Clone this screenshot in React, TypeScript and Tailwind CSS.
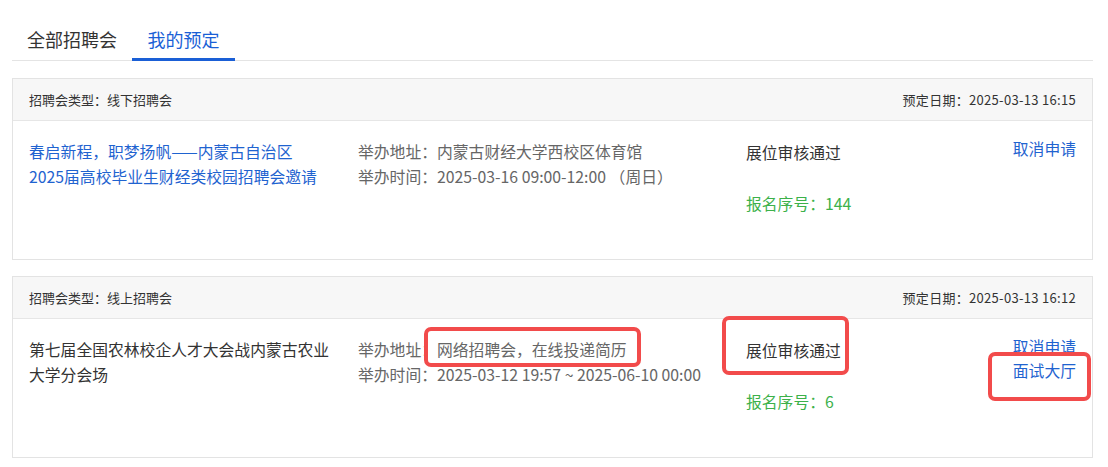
import React from 'react'

interface Booking {
  type: string
  bookedAt: string
  title: string[]
  titleLink: boolean
  address: string
  time: string
  status: string
  serial: string
  actions: string[]
}

const bookings: Booking[] = [
  {
    type: '线下招聘会',
    bookedAt: '2025-03-13 16:15',
    title: ['春启新程，职梦扬帆——内蒙古自治区', '2025届高校毕业生财经类校园招聘会邀请'],
    titleLink: true,
    address: '内蒙古财经大学西校区体育馆',
    time: '2025-03-16 09:00-12:00 （周日）',
    status: '展位审核通过',
    serial: '144',
    actions: ['取消申请'],
  },
  {
    type: '线上招聘会',
    bookedAt: '2025-03-13 16:12',
    title: ['第七届全国农林校企人才大会战内蒙古农业', '大学分会场'],
    titleLink: false,
    address: '网络招聘会，在线投递简历',
    time: '2025-03-12 19:57 ~ 2025-06-10 00:00',
    status: '展位审核通过',
    serial: '6',
    actions: ['取消申请', '面试大厅'],
  },
]

const BookingCard: React.FC<{ item: Booking }> = ({ item }) => {
  return (
    <article className="border border-[#e3e3e3] bg-white">
      <header className="h-[42px] bg-[#f7f7f7] border-b border-[#e6e6e6] pl-4 pr-[16px] flex items-center justify-between text-[13px] text-[#333]">
        <span>招聘会类型：{item.type}</span>
        <span className="tracking-[0.3px]">预定日期：{item.bookedAt}</span>
      </header>
      <div className="h-[138px] flex pl-4 pr-[16px] pt-[18px] text-[15.8px] leading-[25px]">
        <div className={`w-[329px] shrink-0 ${item.titleLink ? 'text-[#1f63d0]' : 'text-[#333]'}`}>
          {item.title.map((line, i) => (
            <div key={i}>{line}</div>
          ))}
        </div>
        <div className="w-[388px] shrink-0 text-[#666] whitespace-nowrap">
          <div>举办地址：{item.address}</div>
          <div>举办时间：{item.time}</div>
        </div>
        <div className="flex-1 pt-px">
          <div className="text-[#333]">{item.status}</div>
          <div className="mt-[26px] text-[#3cb14a]">报名序号：{item.serial}</div>
        </div>
        <div className="flex flex-col items-end -mt-[2px] leading-[24px] text-[#1f63d0]">
          {item.actions.map((a) => (
            <a key={a} className="cursor-pointer">{a}</a>
          ))}
        </div>
      </div>
    </article>
  )
}

export default function App() {
  return (
    <div
      className="relative w-[1108px] h-[467px] bg-white pl-3 pr-[15px] overflow-hidden"
      style={{ fontFamily: '"Noto Sans CJK SC", "Noto Sans", sans-serif' }}
    >
      <nav className="mt-4 flex border-b border-[#e4e4e4] text-[18px] leading-[22px]">
        <button className="w-[120px] pt-3 pb-2 -mb-px border-b-[3px] border-transparent text-[#333]">全部招聘会</button>
        <button className="w-[103px] pt-3 pb-2 -mb-px border-b-[3px] border-[#1a5fd6] text-[#1a5fd6]">我的预定</button>
      </nav>

      <div className="mt-[17px] flex flex-col gap-[16px]">
        {bookings.map((b) => (
          <BookingCard key={b.bookedAt} item={b} />
        ))}
      </div>

      {/* highlight frames */}
      <div className="absolute left-[424px] top-[327px] w-[217px] h-[40px] border-4 border-[#f24b4b] rounded-[7px]" />
      <div className="absolute left-[722px] top-[316px] w-[127px] h-[59px] border-4 border-[#f24b4b] rounded-[7px]" />
      <div className="absolute left-[988px] top-[352px] w-[103px] h-[49px] border-4 border-[#f24b4b] rounded-[7px]" />
    </div>
  )
}
